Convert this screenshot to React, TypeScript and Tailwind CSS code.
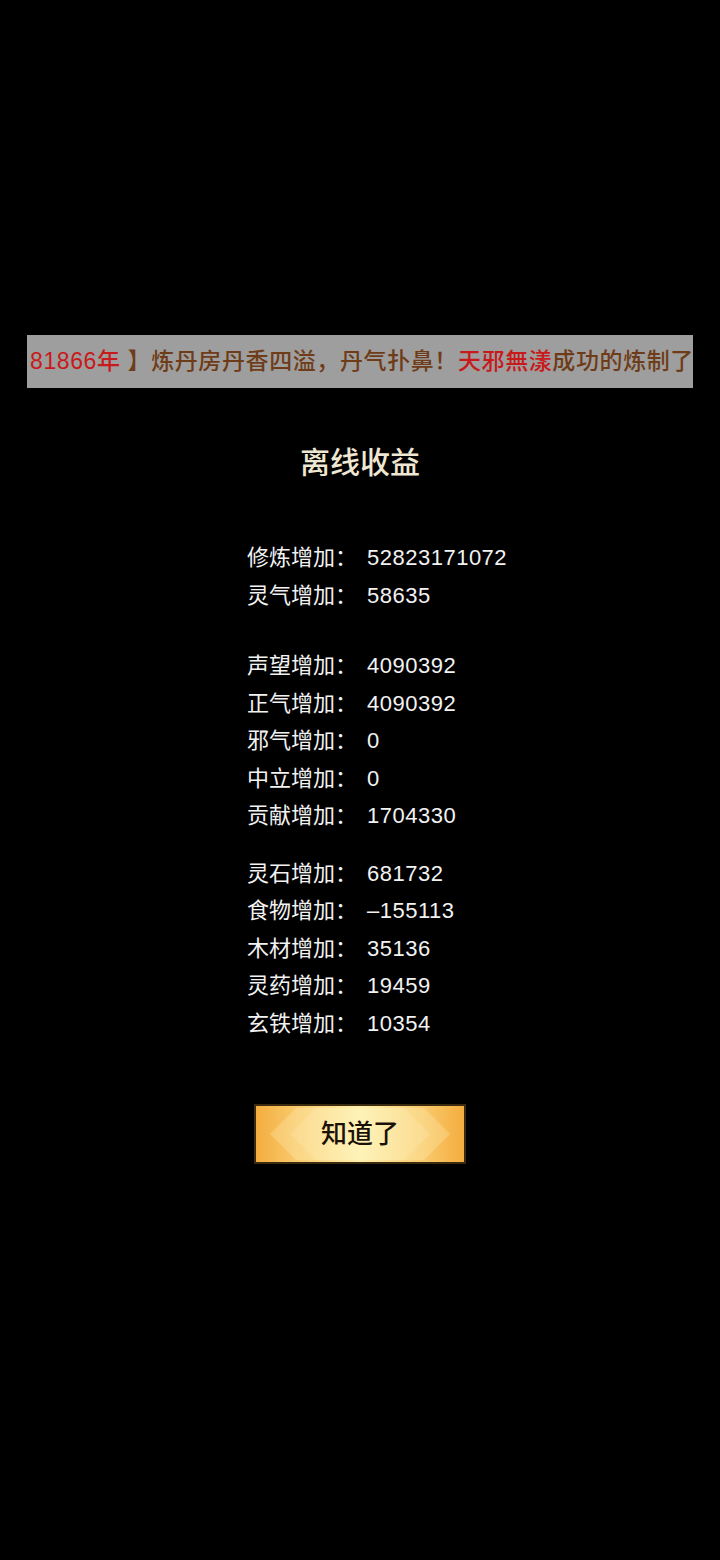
import React from "react";

const groups: [string, string][][] = [
  [
    ["修炼增加：", "52823171072"],
    ["灵气增加：", "58635"],
  ],
  [
    ["声望增加：", "4090392"],
    ["正气增加：", "4090392"],
    ["邪气增加：", "0"],
    ["中立增加：", "0"],
    ["贡献增加：", "1704330"],
  ],
  [
    ["灵石增加：", "681732"],
    ["食物增加：", "–155113"],
    ["木材增加：", "35136"],
    ["灵药增加：", "19459"],
    ["玄铁增加：", "10354"],
  ],
];

const font = { fontFamily: '"Liberation Sans", "Noto Sans CJK SC", sans-serif' };

export default function App() {
  return (
    <div className="w-[720px] h-[1560px] bg-black flex flex-col items-center" style={font}>
      <div className="mt-[335px] w-[666px] h-[53px] bg-[#9e9e9e] overflow-hidden flex items-center pl-[3px]">
        <p className="whitespace-nowrap text-[23px] font-medium text-[#6e3c18] tracking-[0.6px]">
          <span className="text-[#c81a1a]">81866年</span> 】炼丹房丹香四溢，丹气扑鼻！
          <span className="text-[#c81a1a]">天邪無漾</span>成功的炼制了一枚上品丹药
        </p>
      </div>

      <h1 className="mt-[55px] text-[30px] leading-[40px] font-medium text-[#efe7d2]">离线收益</h1>

      <div className="mt-[56px] w-full pl-[247px] flex flex-col">
        {groups.map((g, gi) => (
          <div key={gi} className={gi === 1 ? "mt-[33px]" : gi === 2 ? "mt-[20px]" : ""}>
            {g.map(([k, v]) => (
              <div key={k} className="flex h-[37.5px] items-center text-[22px] text-[#f2f2f2]">
                <span className="w-[120px] shrink-0">{k}</span>
                <span className="tracking-[0.5px]">{v}</span>
              </div>
            ))}
          </div>
        ))}
      </div>

      <button className="relative mt-[62px] w-[212px] h-[60px] border-2 border-[#3a2a10] bg-[linear-gradient(90deg,#f4ad3f_0%,#fad27a_25%,#fff1ae_50%,#fad27a_75%,#f4ad3f_100%)] overflow-hidden flex items-center justify-center">
        <svg className="absolute inset-0" width="208" height="56" viewBox="0 0 208 56">
          <path d="M40 2 L14 28 L40 54 L168 54 L194 28 L168 2 Z" fill="#fff6c8" opacity="0.25" />
          <path d="M60 2 L34 28 L60 54 L148 54 L174 28 L148 2 Z" fill="#fff6c8" opacity="0.2" />
        </svg>
        <span className="relative text-[26px] text-[#1a1208] font-medium">知道了</span>
      </button>
    </div>
  );
}
